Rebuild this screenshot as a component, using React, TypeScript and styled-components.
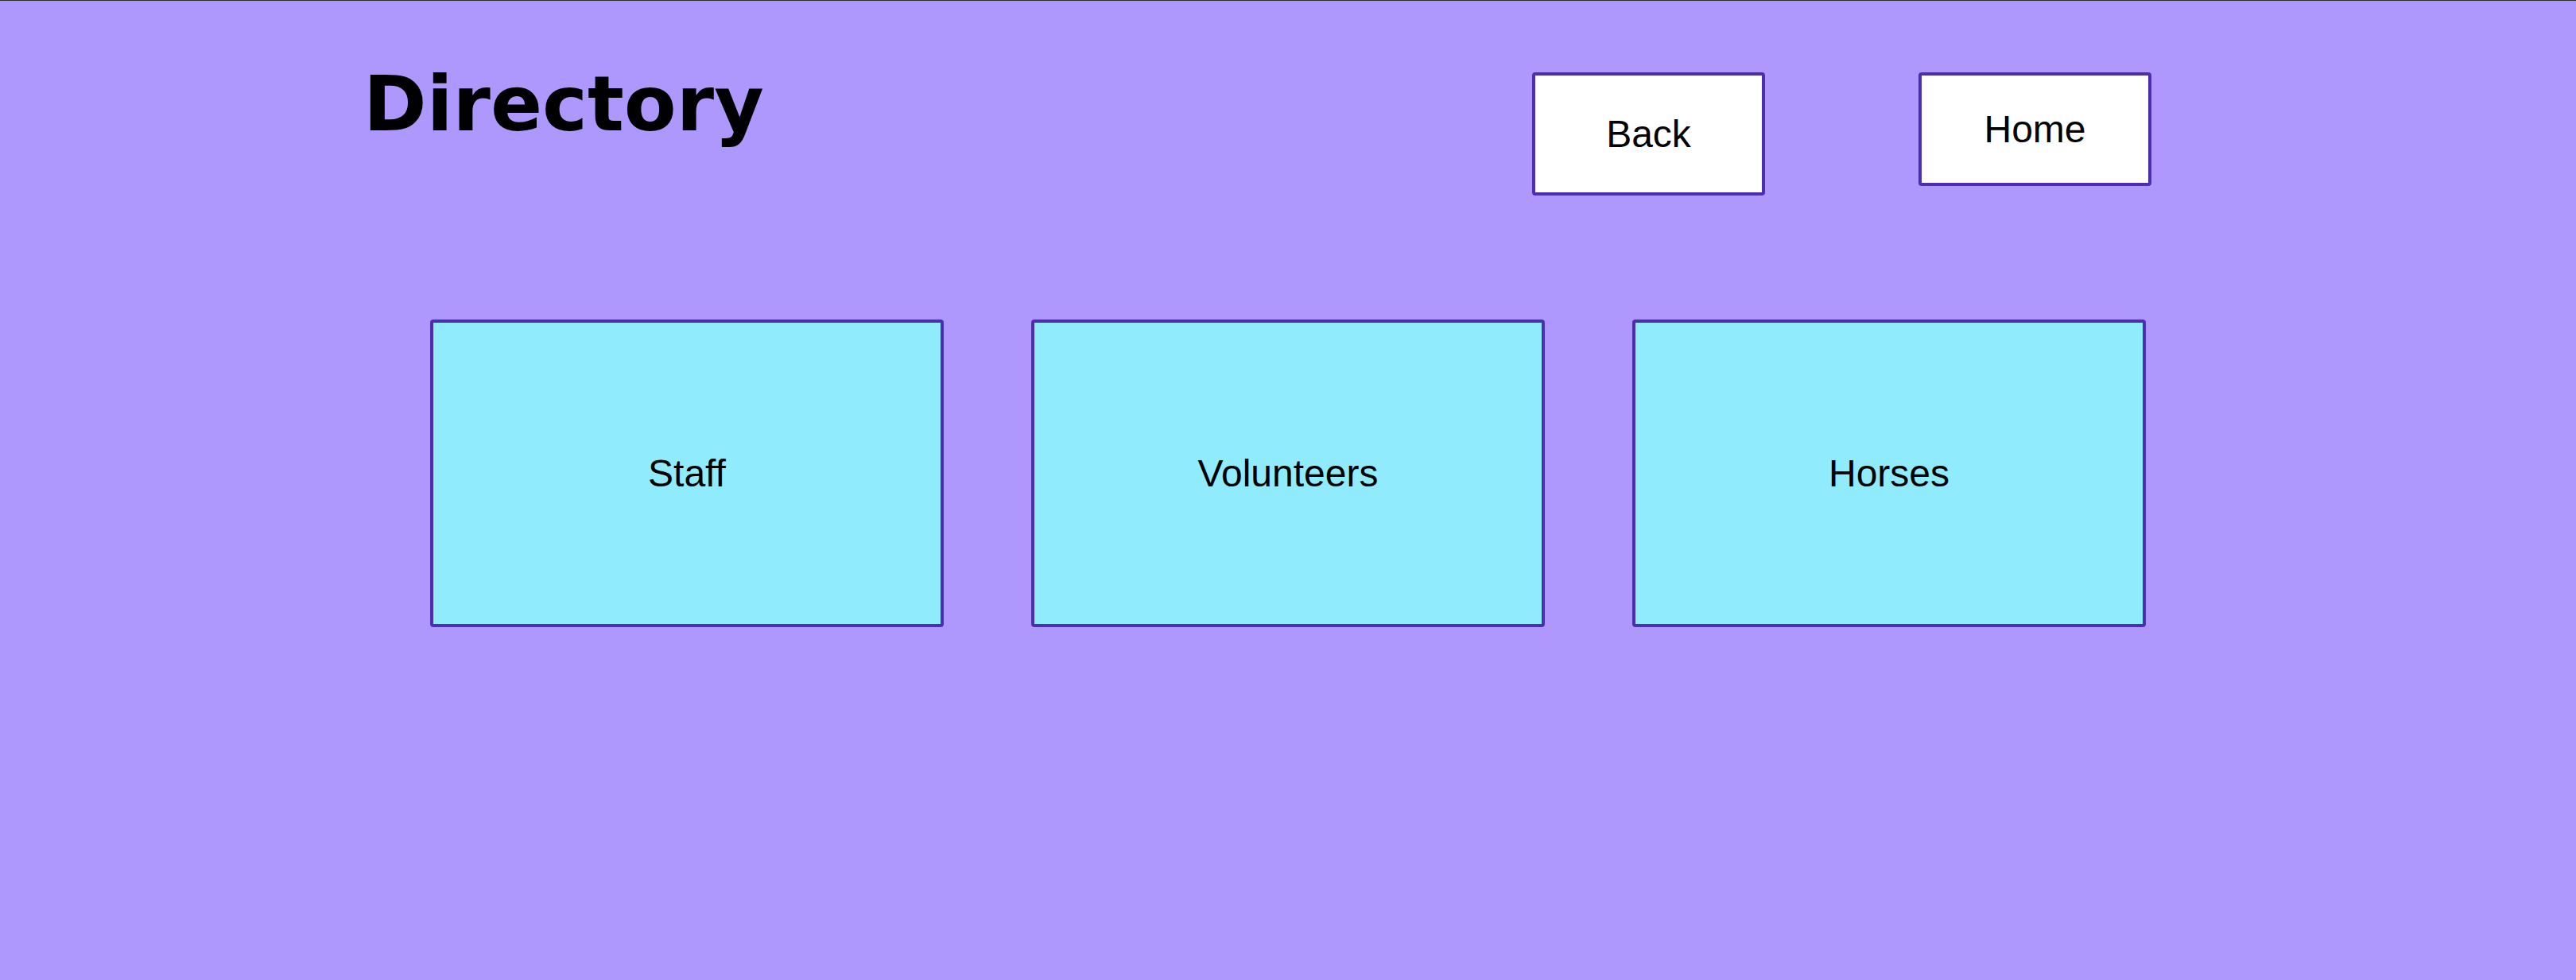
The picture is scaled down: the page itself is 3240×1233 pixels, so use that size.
import { FC } from "react";
import styled, { createGlobalStyle } from "styled-components";

const GlobalStyle = createGlobalStyle`
  html, body {
    margin: 0;
    padding: 0;
    background-color: #ae98fe;
  }

  body {
    min-height: 1233px;
    font-family: "Liberation Sans", Arial, sans-serif;
  }
`;

const Page = styled.div`
  min-height: 1232px;
  border-top: 1px solid #2e2e2e;
  background-color: #ae98fe;
`;

const Header = styled.header`
  display: flex;
  align-items: flex-start;
  padding: 74px 0 0 457px;
`;

const Title = styled.h1`
  flex: 0 0 1470px;
  margin: 0;
  font-family: "DejaVu Sans", Verdana, sans-serif;
  font-size: 96px;
  font-weight: 700;
  color: #000;
`;

const Nav = styled.nav`
  display: flex;
  align-items: flex-start;
  gap: 193px;
  margin-top: 16px;
`;

const NavButton = styled.button<{ $height: number }>`
  display: flex;
  align-items: center;
  justify-content: center;
  box-sizing: border-box;
  width: 293px;
  height: ${(p) => p.$height}px;
  padding: 0;
  border: 4px solid #4b2fb0;
  border-radius: 4px;
  background-color: #fff;
  color: #000;
  font-family: "Liberation Sans", Arial, sans-serif;
  font-size: 48px;
  cursor: pointer;
`;

const CardRow = styled.main`
  display: flex;
  justify-content: center;
  gap: 110px;
  margin-top: 156px;
`;

const Card = styled.a`
  display: flex;
  align-items: center;
  justify-content: center;
  box-sizing: border-box;
  width: 646px;
  height: 387px;
  border: 4px solid #4b2fb0;
  border-radius: 4px;
  background-color: #90ebfd;
  color: #000;
  font-size: 48px;
  text-decoration: none;
`;

const sections = ["Staff", "Volunteers", "Horses"];

const App: FC = () => (
  <>
    <GlobalStyle />
    <Page>
      <Header>
        <Title>Directory</Title>
        <Nav>
          <NavButton $height={155}>Back</NavButton>
          <NavButton $height={143}>Home</NavButton>
        </Nav>
      </Header>
      <CardRow>
        {sections.map((name) => (
          <Card key={name} href={`#${name.toLowerCase()}`}>
            {name}
          </Card>
        ))}
      </CardRow>
    </Page>
  </>
);

export default App;
